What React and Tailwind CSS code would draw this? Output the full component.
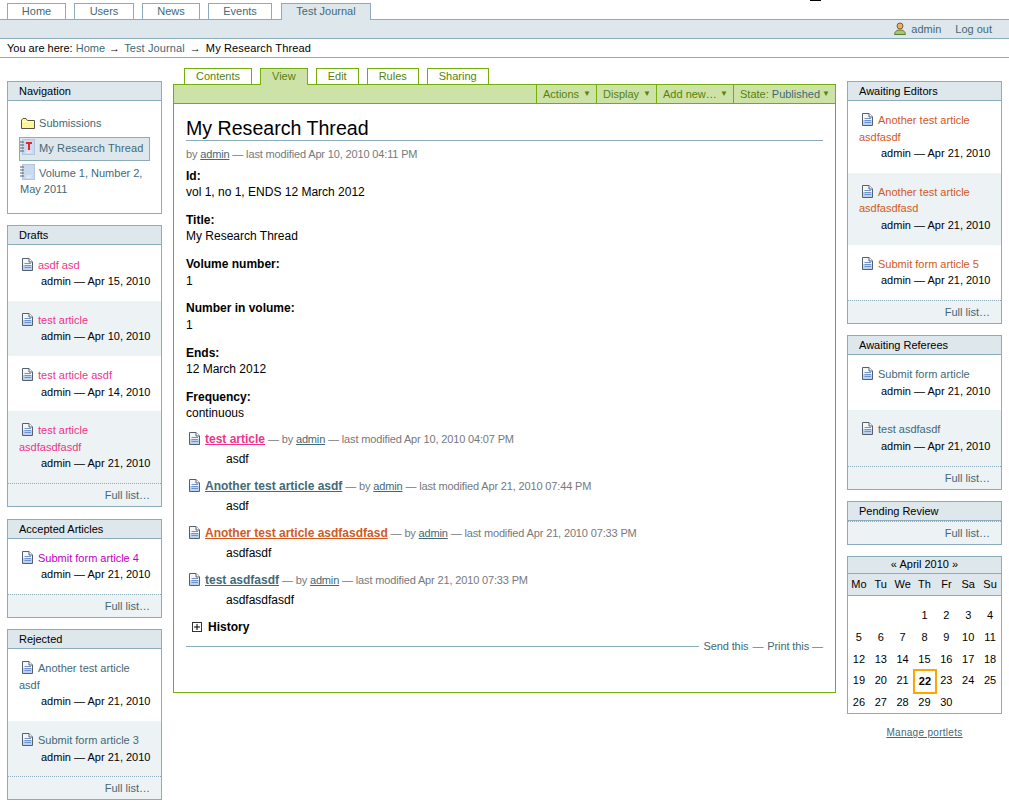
const TEAL = "text-[#436976]";

function DocIcon({ className = "" }) {
  return (
    <svg width="11" height="13" viewBox="0 0 11 13" className={`inline-block align-[-2px] ${className}`}>
      <path d="M0.5 0.5H7L10.5 4V12.5H0.5Z" fill="#f4f6fa" stroke="#55606e" />
      <path d="M7 0.5V4H10.5" fill="#fff" stroke="#55606e" />
      <path d="M1 7H10V12H1Z" fill="#bcd2f0" />
      <path d="M2.5 5.5H9M2.5 7.5H9M2.5 9.5H9" stroke="#6f93cc" />
    </svg>
  );
}

function FolderIcon() {
  return (
    <svg width="14" height="12" viewBox="0 0 14 12" className="inline-block align-[-2px]">
      <path d="M0.5 3V11.5H13.5V3.5H6.5L5 1.5H2Z" fill="#fdf59a" stroke="#55534a" />
      <path d="M1 4.5H13" stroke="#fffdd8" />
    </svg>
  );
}

function BookIcon({ letter }) {
  return (
    <svg width="15" height="16" viewBox="0 0 15 16" className="inline-block align-[-3px]">
      <rect x="2.5" y="0.5" width="12" height="15" fill="#c9d9ee" stroke="#b4c6de" />
      <path d="M0 3H4M0 6H4M0 9H4M0 12H4" stroke="#53606f" />
      <path d="M6 12H12M6 13.5H11" stroke="#e4edf8" />
      {letter && <path d="M6 4H12M9 4V11" stroke="#e3262e" strokeWidth="2" />}
    </svg>
  );
}

function UserIcon() {
  return (
    <svg width="12" height="13" viewBox="0 0 12 13" className="inline-block align-[-2px]">
      <path d="M0.5 12.5C1 9 3 8 6 8S11 9 11.5 12.5Z" fill="#a6c86c" stroke="#5d7a38" />
      <circle cx="6" cy="4" r="3" fill="#e8b06c" stroke="#8a5a2c" />
    </svg>
  );
}

function Portlet({ title, children }) {
  return (
    <div className="border border-[#8cacbb] bg-white">
      <div className="h-[19px] bg-[#dee7ec] border-b border-[#8cacbb] pl-[11px] leading-[18px] text-black">{title}</div>
      {children}
    </div>
  );
}

function FullList() {
  return (
    <div className={`h-[23px] border-t border-dotted border-[#8cacbb] bg-[#edf2f5] text-right pr-[11px] leading-[22px] ${TEAL}`}>
      Full list…
    </div>
  );
}

function Item({ title, date, color, odd }) {
  return (
    <div className={`px-[11px] py-[11.17px] leading-[16.5px] ${odd ? "bg-[#edf2f5]" : ""}`}>
      <div className={color}>
        <DocIcon className="ml-[3px] mr-[5px]" />
        {title}
      </div>
      <div className="pl-[22px] whitespace-nowrap text-black">admin — {date}</div>
    </div>
  );
}

function ItemPortlet({ title, items, color }) {
  return (
    <Portlet title={title}>
      {items.map((it, i) => (
        <Item key={i} title={it[0]} date={it[1]} color={color} odd={i % 2 === 1} />
      ))}
      <FullList />
    </Portlet>
  );
}

function TopTab({ label, w, active }) {
  return (
    <div
      className={`border border-b-0 border-[#8cacbb] leading-[15px] text-center ${TEAL} ${w} ${
        active ? "h-[17px] relative z-10 bg-[#dee7ec]" : "h-[16px] bg-white"
      }`}
    >
      {label}
    </div>
  );
}

function GreenTab({ label, active }) {
  return (
    <div
      className={`border border-b-0 border-[#74ae0b] leading-[15px] px-[11px] text-[#578308] ${
        active ? "h-[17px] relative z-10 bg-[#cde2a7]" : "h-[16px] bg-white"
      }`}
    >
      {label}
    </div>
  );
}

function Menu({ children, w }) {
  return (
    <div className={`h-full border-l border-[#74ae0b] pl-[6px] flex items-center justify-between pr-[5px] text-[#578308] ${w}`}>
      <span>{children}</span>
      <span className="text-[8px] leading-none">▼</span>
    </div>
  );
}

function Field({ label, value }) {
  return (
    <div className="mb-[11.25px] leading-[16.5px] text-[12px] text-black">
      <div className="font-bold">{label}</div>
      <div>{value}</div>
    </div>
  );
}

function Entry({ title, color, time, desc }) {
  return (
    <div className="mb-[10.5px]">
      <div className="leading-[16.5px] text-[#76797c] whitespace-nowrap pl-[3px] tracking-[-0.15px]">
        <DocIcon className="mr-[5px]" />
        <a className={`font-bold underline text-[12px] tracking-normal ${color}`}>{title}</a> — by{" "}
        <a className={`underline ${TEAL}`}>admin</a> — last modified {time}
      </div>
      <div className="pl-[40px] pt-[3.5px] leading-[16.5px] text-[12px] text-black">{desc}</div>
    </div>
  );
}

const days = [
  ["", "", "", "1", "2", "3", "4"],
  ["5", "6", "7", "8", "9", "10", "11"],
  ["12", "13", "14", "15", "16", "17", "18"],
  ["19", "20", "21", "22", "23", "24", "25"],
  ["26", "27", "28", "29", "30", "", ""],
];

function Calendar() {
  return (
    <div className="border border-[#8cacbb] bg-white text-black">
      <div className="h-[17px] bg-[#dee7ec] border-b border-[#8cacbb] text-center leading-[15px]">« April 2010 »</div>
      <div className="h-[22px] bg-[#dee7ec] border-b border-[#8cacbb] grid grid-cols-7 text-center leading-[20px]">
        {["Mo", "Tu", "We", "Th", "Fr", "Sa", "Su"].map((d) => (
          <div key={d}>{d}</div>
        ))}
      </div>
      <div className="pt-[9.5px] grid grid-cols-7 text-center">
        {days.flat().map((d, i) => (
          <div key={i} className="h-[21.6px] leading-[21.6px] relative">
            {d === "22" ? (
              <span className="absolute left-[-1px] right-[-2px] top-[-1px] bottom-[-2px] border-2 border-[#ffa500] font-bold leading-[20px]">22</span>
            ) : (
              d
            )}
          </div>
        ))}
      </div>
    </div>
  );
}

export default function App() {
  return (
    <div className="relative w-[1009px] h-[805px] overflow-hidden bg-white text-[11px] font-['Liberation_Sans',Arial,sans-serif]">
      <div className="absolute left-[810px] top-0 w-[11px] h-[1px] bg-black" />

      <div className="flex gap-[8px] pl-[7px] pt-[3px] h-[19px]">
        <TopTab label="Home" w="w-[59px]" />
        <TopTab label="Users" w="w-[60px]" />
        <TopTab label="News" w="w-[58px]" />
        <TopTab label="Events" w="w-[64px]" />
        <div className="ml-[1px]">
          <TopTab label="Test Journal" w="w-[90px]" active />
        </div>
      </div>
      <div className="h-[20px] bg-[#dee7ec] border-y border-[#8cacbb] flex justify-end items-center gap-[14px] pr-[17px] text-[#436976]">
        <span>
          <UserIcon /> <span className="ml-[2px]">admin</span>
        </span>
        <span>Log out</span>
      </div>
      <div className="h-[19px] border-b border-[#8cacbb] pl-[7px] leading-[18px] text-black">
        You are here: <a className={TEAL}>Home</a> <span className="mx-[1px]">→</span>{" "}
        <a className={`tracking-[0.1px] ${TEAL}`}>Test Journal</a> <span className="mx-[2px]">→</span>{" "}
        <span className="tracking-[0.15px]">My Research Thread</span>
      </div>

      <div className="flex px-[7px]">
        <div className="w-[155px] pt-[23px] flex flex-col gap-[11.4px]">
          <Portlet title="Navigation">
            <div className="h-[112px] px-[11px] pt-[14px] leading-[16.5px]">
              <div className={`pl-[2px] ${TEAL}`}>
                <FolderIcon /> <span className="ml-[1px]">Submissions</span>
              </div>
              <div className={`mt-[5px] h-[24px] border border-[#8cacbb] bg-[#dee7ec] leading-[21px] whitespace-nowrap ${TEAL}`}>
                <BookIcon letter /> <span className="ml-[1px] tracking-[0.1px]">My Research Thread</span>
              </div>
              <div className={`mt-[3px] pl-[1px] ${TEAL}`}>
                <BookIcon /> <span className="ml-[1px]">Volume 1, Number 2, May 2011</span>
              </div>
            </div>
          </Portlet>
          <ItemPortlet
            title="Drafts"
            color="text-[#f0338c]"
            items={[
              ["asdf asd", "Apr 15, 2010"],
              ["test article", "Apr 10, 2010"],
              ["test article asdf", "Apr 14, 2010"],
              ["test article asdfasdfasdf", "Apr 21, 2010"],
            ]}
          />
          <ItemPortlet title="Accepted Articles" color="text-[#c000c0]" items={[["Submit form article 4", "Apr 21, 2010"]]} />
          <ItemPortlet
            title="Rejected"
            color={TEAL}
            items={[
              ["Another test article asdf", "Apr 21, 2010"],
              ["Submit form article 3", "Apr 21, 2010"],
            ]}
          />
        </div>

        <div className="w-[663px] ml-[11px] pt-[10px]">
          <div className="flex gap-[8px] pl-[11px] h-[16px]">
            <GreenTab label="Contents" />
            <GreenTab label="View" active />
            <GreenTab label="Edit" />
            <GreenTab label="Rules" />
            <GreenTab label="Sharing" />
          </div>
          <div className="h-[609px] border border-[#74ae0b] bg-white">
            <div className="h-[19px] bg-[#cde2a7] border-b border-[#74ae0b] flex justify-end">
              <Menu w="w-[60px]">Actions</Menu>
              <Menu w="w-[60px]">Display</Menu>
              <Menu w="w-[77px]">Add new…</Menu>
              <Menu w="w-[102px]">
                State: <span className="text-[#436976]">Published</span>
              </Menu>
            </div>
            <div className="px-[12px] pt-[12px]">
              <h1 className="text-[19.6px] leading-[25px] border-b border-[#8cacbb] h-[25px] text-black">My Research Thread</h1>
              <div className="mt-[5px] mb-[5px] leading-[16.5px] text-[#76797c] tracking-[-0.15px]">
                by <a className={`underline ${TEAL}`}>admin</a> — last modified Apr 10, 2010 04:11 PM
              </div>
              <Field label="Id:" value="vol 1, no 1, ENDS 12 March 2012" />
              <Field label="Title:" value="My Research Thread" />
              <Field label="Volume number:" value="1" />
              <Field label="Number in volume:" value="1" />
              <Field label="Ends:" value="12 March 2012" />
              <Field label="Frequency:" value="continuous" />
              <div className="-mt-[2.5px]">
                <Entry title="test article" color="text-[#f0338c]" time="Apr 10, 2010 04:07 PM" desc="asdf" />
                <Entry title="Another test article asdf" color={TEAL} time="Apr 21, 2010 07:44 PM" desc="asdf" />
                <Entry title="Another test article asdfasdfasd" color="text-[#d15a1e]" time="Apr 21, 2010 07:33 PM" desc="asdfasdf" />
                <Entry title="test asdfasdf" color={TEAL} time="Apr 21, 2010 07:33 PM" desc="asdfasdfasdf" />
              </div>
              <div className="pl-[6px] font-bold leading-[16.5px] text-black text-[12px]">
                <svg width="10" height="10" viewBox="0 0 10 10" className="inline-block mr-[6px] align-[-1px]">
                  <rect x="0.5" y="0.5" width="9" height="9" fill="#fff" stroke="#333" />
                  <path d="M2 5H8M5 2V8" stroke="#000" />
                </svg>
                History
              </div>
              <div className="mt-[3px] flex items-center gap-[4px] text-[#436976] tracking-[-0.1px]">
                <div className="flex-1 h-px bg-[#8cacbb]" />
                <span>Send this</span>
                <span className="text-[#76797c]">—</span>
                <span className="-mr-[1px]">Print this</span>
                <span className="text-[#76797c]">—</span>
              </div>
            </div>
          </div>
        </div>

        <div className="w-[155px] ml-[11px] pt-[23px] flex flex-col gap-[11px]">
          <ItemPortlet
            title="Awaiting Editors"
            color="text-[#d15a1e]"
            items={[
              ["Another test article asdfasdf", "Apr 21, 2010"],
              ["Another test article asdfasdfasd", "Apr 21, 2010"],
              ["Submit form article 5", "Apr 21, 2010"],
            ]}
          />
          <ItemPortlet
            title="Awaiting Referees"
            color={TEAL}
            items={[
              ["Submit form article", "Apr 21, 2010"],
              ["test asdfasdf", "Apr 21, 2010"],
            ]}
          />
          <Portlet title="Pending Review">
            <FullList />
          </Portlet>
          <div className="mt-[0.3px]">
            <Calendar />
            <a className={`block mt-[11px] text-center underline text-[10px] tracking-[0.3px] ${TEAL}`}>Manage portlets</a>
          </div>
        </div>
      </div>
    </div>
  );
}
